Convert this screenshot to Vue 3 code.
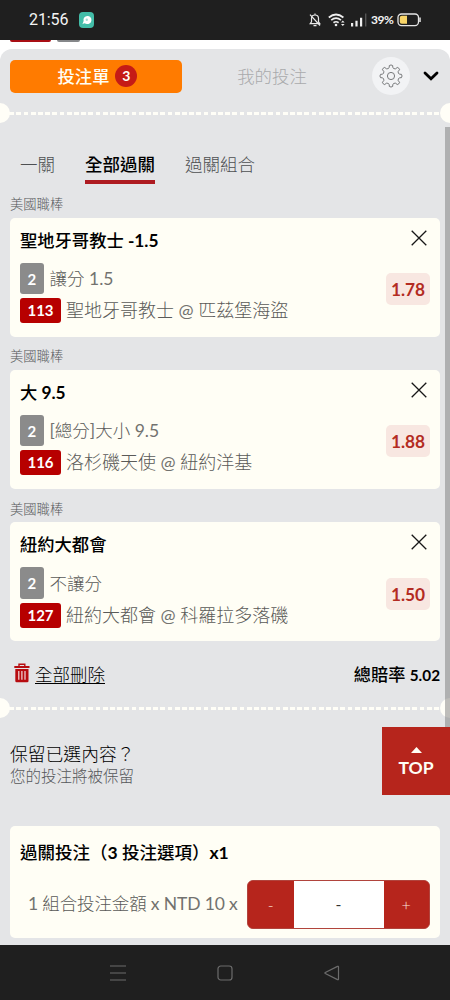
<script setup>
import { h } from 'vue'

const bets = [
  { title: '聖地牙哥教士 -1.5', market: '讓分 1.5', code: '113', game: '聖地牙哥教士 @ 匹茲堡海盜', odds: '1.78' },
  { title: '大 9.5', market: '[總分]大小 9.5', code: '116', game: '洛杉磯天使 @ 紐約洋基', odds: '1.88' },
  { title: '紐約大都會', market: '不讓分', code: '127', game: '紐約大都會 @ 科羅拉多落磯', odds: '1.50' },
]

// Latin runs carry a heavier weight than the Chinese text around them.
const Mixed = (props) =>
  h('span', { class: 'mixed' }, props.text.split(/([\x20-\x7e]+)/).filter(Boolean).map((run) =>
    h('span', { style: { fontWeight: /^[\x20-\x7e]/.test(run) ? (props.strong ? 700 : 400) : (props.strong ? 500 : 300), opacity: /^[\x20-\x7e]/.test(run) && !props.strong ? 0.85 : 1 } }, run)))
Mixed.props = ['text', 'strong']

const gear = Array.from({ length: 8 }, (_, i) => {
  const at = (r, d) => {
    const a = ((i * 45 + d - 90) * Math.PI) / 180
    return `${(12 + r * Math.cos(a)).toFixed(2)} ${(12 + r * Math.sin(a)).toFixed(2)}`
  }
  return `${i ? 'L' : 'M'}${at(8.6, -12)}L${at(10.6, -9)}Q${at(11.6, 0)} ${at(10.6, 9)}L${at(8.6, 12)}Q${at(7.4, 22.5)} ${at(8.6, 33)}`
}).join('') + 'Z'
</script>

<template>
  <div class="screen">
    <header class="status">
      <span class="clock">21:56</span>
      <svg class="app" width="15" height="16" viewBox="0 0 15 16">
        <rect width="15" height="16" rx="4" fill="#43bda8" />
        <path d="M3.4 12.3 4.6 9A4 4 0 1 1 7 11.7L5.2 11.2Z" fill="#fff" />
        <circle cx="7.8" cy="7.8" r="1.2" fill="#a5ded4" />
      </svg>
      <div class="indicators">
        <svg width="12" height="14" viewBox="0 0 12 14" fill="none" stroke="#e8e8e8" stroke-width="1.2">
          <path d="M1.2 10.7h9.6L9.5 8.8V5.5C9.5 3.3 8 2 6 2S2.5 3.3 2.5 5.5v3.3ZM6 .6V2M4.5 12.7h3M1 1.7l10 10.8" />
        </svg>
        <svg class="wifi" width="18" height="14" viewBox="0 0 18 14" fill="none" stroke="#eee" stroke-width="1.7">
          <path d="M.8 4.5Q8 -1.5 15.4 4.5M3.2 7.2Q8 3.2 13 7.2M5.5 9.7Q8 7.8 10.6 9.7" />
          <circle cx="8" cy="12" r="1.3" fill="#eee" stroke="none" />
          <path d="m13 9.5 1.8-2 1.8 2ZM13 11l1.8 2 1.8-2Z" fill="#eee" stroke="none" />
        </svg>
        <svg class="signal" width="16" height="14" viewBox="0 0 16 14">
          <path d="M0 10h2.2v3.5H0ZM4.4 7.8h2.2v5.7H4.4ZM9 4.8h2.2v8.7H9Z" fill="#eee" />
          <path d="M14 .5h1.4v13H14Z" fill="#555" />
        </svg>
        <span class="percent">39%</span>
        <svg width="25" height="14" viewBox="0 0 25 14">
          <rect x="1" y="1" width="20.5" height="11.6" rx="3.5" fill="none" stroke="#e5e5e5" stroke-width="1.3" />
          <path d="M4.8 2.8H10v8H4.8Q2.8 10.8 2.8 8.8v-4Q2.8 2.8 4.8 2.8Z" fill="#f8d568" />
          <path d="M23 4.5v4.6" stroke="#ddd" stroke-width="1.6" />
        </svg>
      </div>
    </header>

    <div class="strip"><i class="chip red"></i><i class="chip slate"></i></div>

    <main class="panel">
      <div class="tabs">
        <button class="slip"><span>投注單</span><b>3</b></button>
        <span class="mine">我的投注</span>
        <span class="settings">
          <svg width="24" height="24" viewBox="0 0 24 24" fill="none" stroke="#77797b" stroke-width="1" stroke-linejoin="round">
            <path :d="gear" /><circle cx="12" cy="12" r="3.6" />
          </svg>
        </span>
        <svg class="chevron" width="16" height="10" viewBox="0 0 16 10"><path d="m2 2 6 5.8L14 2" fill="none" stroke="#000" stroke-width="2.8" stroke-linecap="round" /></svg>
      </div>
      <div class="perforation"></div>

      <nav class="modes"><span>一關</span><span class="active">全部過關</span><span>過關組合</span></nav>

      <section v-for="bet in bets" :key="bet.code" class="entry">
        <div class="league">美國職棒</div>
        <article class="bet">
          <div class="info">
            <h3><Mixed :text="bet.title" strong="1" /></h3>
            <div class="market"><b class="count">2</b><Mixed :text="bet.market" /></div>
            <div class="game"><b class="code">{{ bet.code }}</b><Mixed :text="bet.game" /></div>
          </div>
          <div class="side">
            <svg class="close" width="16" height="16" viewBox="0 0 16 16"><path d="m.7.7 14.6 14.6M15.3.7.7 15.3" stroke="#171717" stroke-width="1.3" /></svg>
            <span class="odds">{{ bet.odds }}</span>
          </div>
        </article>
      </section>

      <div class="totals">
        <svg width="16" height="20" viewBox="0 0 16 20">
          <path d="M.3 3h15.2v2H.3Z" fill="#b70c10" />
          <path d="M5 3V1.3h5.8V3" fill="none" stroke="#b70c10" stroke-width="1.4" />
          <path d="M1.3 6h13.2v12q0 1.3-1.3 1.3H2.6Q1.3 19.3 1.3 18Z" fill="#b70c10" />
          <path d="M4.8 8v8.7M7.9 8v8.7M11 8v8.7" stroke="#f2dcdc" stroke-width="1.2" />
        </svg>
        <a class="clear">全部刪除</a>
        <strong>總賠率 <span>5.02</span></strong>
      </div>
      <div class="perforation"></div>

      <div class="keep"><div class="question">保留已選內容？</div><div class="hint">您的投注將被保留</div></div>

      <section class="stake">
        <h3><Mixed text="過關投注（3 投注選項）x1" strong="1" /></h3>
        <div class="amount">
          <span class="formula"><Mixed text="1 組合投注金額 x NTD 10 x" /></span>
          <div class="stepper"><button>-</button><span>-</span><button>+</button></div>
        </div>
      </section>

      <div class="scrollbar"></div>
      <div class="top">
        <svg width="11" height="6" viewBox="0 0 11 6"><path d="M0 6 5.5 0 11 6Z" fill="#fffef5" /></svg>
        <span>TOP</span>
      </div>
    </main>

    <footer class="system">
      <svg width="16" height="16" viewBox="0 0 16 16"><path d="M0 1h16M0 8h16M0 15h16" stroke="#6c6c6c" stroke-width="1.2" /></svg>
      <svg width="16" height="16" viewBox="0 0 16 16"><rect x="1" y="1" width="14" height="14" rx="2.8" fill="none" stroke="#6c6c6c" stroke-width="1.2" /></svg>
      <svg width="16" height="16" viewBox="0 0 16 16"><path d="M14.5 2v12q0 1-1 .6L1.3 8.6q-.9-.6 0-1.2L13.5 1.4q1-.4 1 .6Z" fill="none" stroke="#6c6c6c" stroke-width="1.2" /></svg>
    </footer>
  </div>
</template>

<style>
body { margin: 0; }
</style>

<style scoped>
* { box-sizing: border-box; }
.screen { width: 450px; height: 1000px; overflow: hidden; display: flex; flex-direction: column; background: #fff; font-family: Lato, "Noto Sans CJK TC", sans-serif; white-space: nowrap; color: #000; }
svg { display: block; flex: none; }
button { border: 0; padding: 0; font: inherit; }
h3 { margin: 0; }
.mixed { white-space: pre; }
.status { flex: none; height: 40px; background: #1f1f1f; display: flex; align-items: center; padding: 0 28px 0 29px; color: #f4f4f4; }
.clock { font: 400 16px/40px Roboto, sans-serif; width: 50px; letter-spacing: -.1px; }
.indicators { margin-left: auto; display: flex; align-items: center; }
.wifi { margin-left: 7px; }
.signal { margin-left: 5px; }
.percent { font: 700 12px/40px Lato, sans-serif; width: 26px; margin-left: 4px; letter-spacing: -.4px; }
.strip { flex: none; height: 9px; display: flex; padding-left: 10px; gap: 6px; }
.chip { height: 2px; border-radius: 0 0 2px 2px; }
.red { width: 41px; background: #a80e14; }
.slate { width: 23px; background: #85878a; }
.panel { position: relative; flex: none; height: 896px; background: #e4e5e7; border-radius: 12px 12px 0 0; }
.tabs { height: 54px; padding: 0 11px 0 10px; display: flex; align-items: center; }
.slip { width: 172px; height: 33px; border-radius: 5px; background: #ff7b00; color: #fffef5; display: flex; align-items: center; justify-content: center; gap: 6px; font-size: 17.3px; font-weight: 500; padding: 0 0 1px 3px; }
.slip b { width: 22px; height: 22px; margin-top: 1px; border-radius: 50%; background: #c51b16; font: 700 14px/22px Lato, sans-serif; }
.mine { width: 180px; text-align: center; font-size: 17.4px; font-weight: 300; color: #a9aaac; padding-bottom: 1px; }
.settings { width: 38px; height: 38px; margin-left: 10px; border-radius: 50%; background: #f2f3f5; display: flex; align-items: center; justify-content: center; }
.chevron { margin-left: 13px; }
.perforation { position: relative; height: 20px; overflow: hidden; background: repeating-linear-gradient(90deg, #fffef7 0 4.8px, transparent 4.8px 7.2px) 2px 9px / 100% 3px no-repeat; }
.perforation::before, .perforation::after { content: ""; position: absolute; top: 0; width: 20px; height: 20px; border-radius: 50%; background: #fffef7; }
.perforation::before { left: -10px; }
.perforation::after { right: -10px; }
.modes { height: 68px; padding: 30px 20px 0; display: flex; gap: 30px; font-size: 17.5px; font-weight: 300; line-height: 24px; color: #4d4f52; }
.modes span { height: 31px; }
.modes .active { color: #000; font-weight: 500; border-bottom: 4px solid #ae1b21; }
.entry { height: 152.4px; padding: 0 10px; }
.league { height: 26.5px; font-size: 13.3px; line-height: 26px; font-weight: 300; color: #55575a; }
.bet { height: 119px; border-radius: 5px; background: #fffef5; padding: 10px; display: flex; justify-content: space-between; }
.bet h3 { height: 35px; font-size: 17.3px; line-height: 26px; }
.market, .game { display: flex; align-items: center; gap: 6px; font-size: 17.5px; color: #5a5a58; line-height: 25px; }
.game { margin-top: 4px; gap: 5px; font-size: 18px; }
.count, .code { border-radius: 3px; color: #fff; text-align: center; font-size: 15px; font-weight: 700; }
.count { width: 23.5px; height: 31.5px; line-height: 32px; background: #8b8b8b; }
.code { width: 41px; height: 25px; line-height: 25px; background: #b70000; }
.side { display: flex; flex-direction: column; align-items: flex-end; }
.close { margin: 2px 3px 27.5px 0; }
.odds { width: 44px; height: 32px; border-radius: 5px; background: #f8e7e1; color: #b32b22; text-align: center; font-size: 17.3px; font-weight: 700; line-height: 34px; }
.totals { height: 49.8px; padding: 0 10px 0 14px; display: flex; align-items: center; font-size: 17.5px; }
.totals svg { margin-top: -1px; }
.clear { margin-left: 5px; font-weight: 300; text-decoration: underline; text-underline-offset: 2px; text-decoration-thickness: 1px; }
.totals strong { margin-left: auto; font-size: 17.2px; font-weight: 500; }
.totals strong span { font-size: 15.3px; font-weight: 700; }
.keep { height: 108px; padding: 24px 10px 0; font-weight: 300; }
.question { font-size: 17.8px; line-height: 24px; color: #000; }
.hint { font-size: 15.5px; line-height: 20px; color: #55575a; }
.stake { margin: 0 10px; height: 112px; padding: 14px 10px 0; border-radius: 5px; background: #fffef5; }
.stake h3 { font-size: 17.5px; line-height: 26px; }
.amount { margin-top: 14px; display: flex; align-items: center; justify-content: space-between; }
.formula { padding: 0 0 3px 8px; font-size: 17.5px; letter-spacing: -.14px; color: #5a5a58; }
.stepper { display: flex; width: 183px; height: 49px; border: 1px solid #b1443d; border-radius: 6px; overflow: hidden; background: #b6251c; }
.stepper button { width: 45.5px; background: #b6251c; color: #fce6db; font-size: 16px; font-weight: 300; }
.stepper span { flex: 1; background: #fff; text-align: center; line-height: 45px; font-size: 16px; color: #333; }
.scrollbar { position: absolute; right: 0; top: 78px; width: 5px; height: 601px; background: #6e6e6e73; }
.top { position: absolute; right: 0; top: 678px; width: 68px; height: 68px; background: #b6251c; color: #fffef5; display: flex; flex-direction: column; align-items: center; padding-top: 20px; font-size: 17.6px; line-height: 29px; font-weight: 700; }
.system { flex: none; height: 55px; background: #1f1f1f; display: flex; align-items: center; padding: 0 110px; justify-content: space-between; }
</style>
